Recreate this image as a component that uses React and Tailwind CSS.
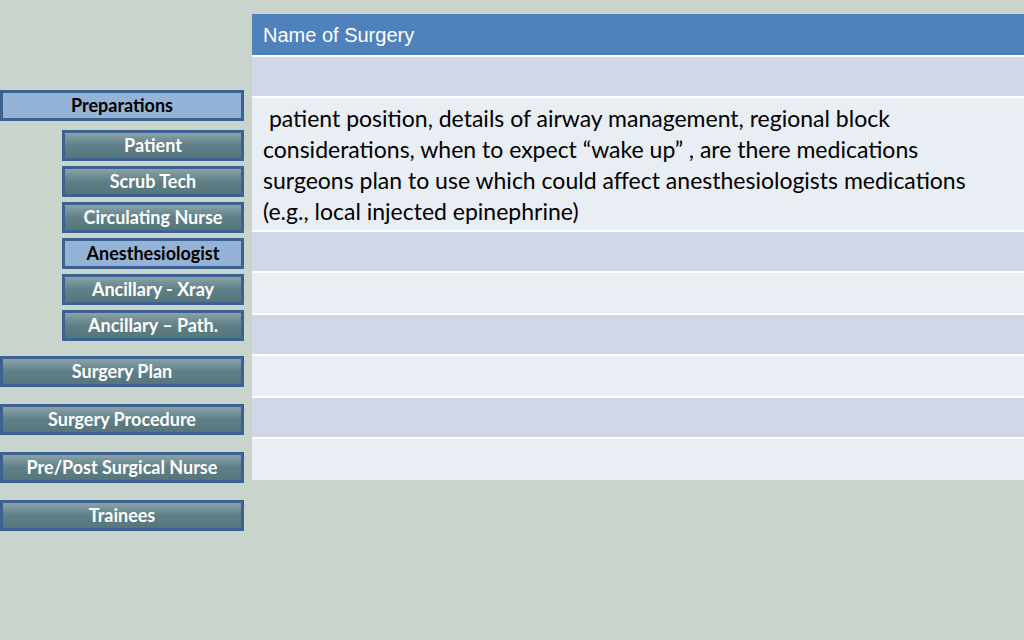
import React from "react";

const font = { fontFamily: "Lato, 'Open Sans', sans-serif" };

function Btn({ label, active, sub, className = "" }) {
  const base = active
    ? "bg-[#95b3d7] text-black"
    : "bg-gradient-to-b from-[#8aa3a8] via-[#5f7f86] to-[#56767c] text-white";
  return (
    <div
      className={`h-[31px] border-[3px] border-[#3b6290] flex items-center justify-center text-[18px] font-bold ${base} ${sub ? "ml-[62px] w-[182px]" : "w-[244px]"} ${className}`}
      style={font}
    >
      {label}
    </div>
  );
}

const rowDark = "bg-[#d0d8e8]";
const rowLight = "bg-[#e9edf4]";

export default function App() {
  return (
    <div className="w-[1024px] h-[640px] bg-[#c9d4cd] flex overflow-hidden">
      <div className="w-[252px] shrink-0 pt-[90px] flex flex-col">
        <Btn label="Preparations" active />
        <Btn label="Patient" sub className="mt-[9px]" />
        <Btn label="Scrub Tech" sub className="mt-[5px]" />
        <Btn label="Circulating Nurse" sub className="mt-[5px]" />
        <Btn label="Anesthesiologist" sub active className="mt-[5px]" />
        <Btn label="Ancillary - Xray" sub className="mt-[5px]" />
        <Btn label="Ancillary – Path." sub className="mt-[5px]" />
        <Btn label="Surgery Plan" className="mt-[15px]" />
        <Btn label="Surgery Procedure" className="mt-[17px]" />
        <Btn label="Pre/Post Surgical Nurse" className="mt-[17px]" />
        <Btn label="Trainees" className="mt-[17px]" />
      </div>
      <div className="flex-1 pt-[14px]">
        <div className="flex flex-col gap-[2px] bg-white">
          <div className="h-[41px] bg-[#4f81bd] flex items-center pl-[11px] text-white text-[20px]" style={{ fontFamily: "'Liberation Sans', Arial, sans-serif" }}>
            Name of Surgery
          </div>
          <div className={`h-[39px] ${rowDark}`} />
          <div className={`h-[132px] ${rowLight} pl-[11px] pt-[5px] text-[23px] leading-[31px] text-black whitespace-nowrap`} style={font}>
            &nbsp;patient position, details of airway management, regional block<br />
            considerations, when to expect “wake up” , are there medications<br />
            surgeons plan to use which could affect anesthesiologists medications<br />
            (e.g., local injected epinephrine)
          </div>
          <div className={`h-[39px] ${rowDark}`} />
          <div className={`h-[40px] ${rowLight}`} />
          <div className={`h-[39px] ${rowDark}`} />
          <div className={`h-[40px] ${rowLight}`} />
          <div className={`h-[39px] ${rowDark}`} />
          <div className={`h-[41px] ${rowLight}`} />
        </div>
      </div>
    </div>
  );
}
